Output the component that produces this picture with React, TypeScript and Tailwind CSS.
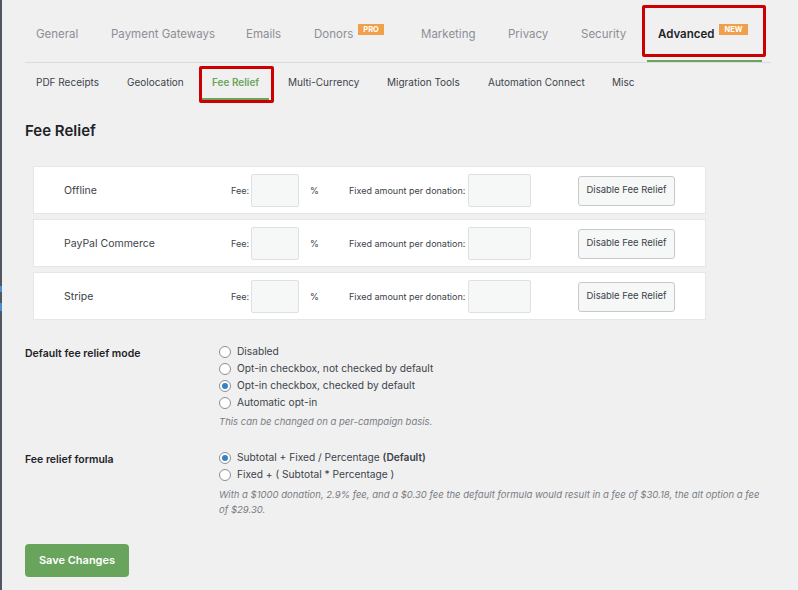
import React from 'react';

type Tab = { label: string; width: string; active?: boolean; badge?: string };

const tabs: Tab[] = [
    { label: 'General', width: 'w-[75px]' },
    { label: 'Payment Gateways', width: 'w-[135px]' },
    { label: 'Emails', width: 'w-[68px]' },
    { label: 'Donors', width: 'w-[107px]', badge: 'PRO' },
    { label: 'Marketing', width: 'w-[87px]' },
    { label: 'Privacy', width: 'w-[73px]' },
    { label: 'Security', width: 'w-[77px]' },
    { label: 'Advanced', width: 'w-[115px]', active: true, badge: 'NEW' },
];

const subTabs: Tab[] = [
    { label: 'PDF Receipts', width: 'w-[91px]' },
    { label: 'Geolocation', width: 'w-[85px]' },
    { label: 'Fee Relief', width: 'w-[68px] mr-[8px]', active: true },
    { label: 'Multi-Currency', width: 'w-[99px]' },
    { label: 'Migration Tools', width: 'w-[101px]' },
    { label: 'Automation Connect', width: 'w-[124px]' },
    { label: 'Misc', width: 'w-[50px]' },
];

const gateways = ['Offline', 'PayPal Commerce', 'Stripe'];

const Radio = ({ label, checked }: { label: React.ReactNode; checked?: boolean }) => (
    <label className="flex items-center h-[17px] text-[10.2px] text-[#3c434a]">
        <span className="w-[12px] h-[12px] rounded-full border border-[#8c8f94] bg-white flex items-center justify-center mr-[6px] shrink-0">
            {checked && <span className="w-[6px] h-[6px] rounded-full bg-[#3582c4]" />}
        </span>
        {label}
    </label>
);

export default function App() {
    return (
        <div className="flex min-h-[590px] bg-[#f0f0f1] font-['Inter',sans-serif]">
            {/* admin sidebar edge */}
            <div className="w-[2px] bg-[#50575e] flex flex-col shrink-0">
                <div className="mt-[286px] h-[6px] bg-[#4a90d9]" />
                <div className="mt-[11px] h-[8px] bg-[#4a90d9]" />
            </div>

            <div className="flex-1 pl-[23px] pr-[32px]">
                {/* main tabs */}
                <nav className="flex border-b border-[#dcdcde]">
                    {tabs.map((tab) => (
                        <div
                            key={tab.label}
                            className={`${tab.width} relative h-[62px] pt-[10px] pl-[11px] flex items-center border-b-2 whitespace-nowrap text-[11.5px] ${
                                tab.active
                                    ? 'border-[#6aa55a] text-[#1d2327] font-semibold'
                                    : 'border-transparent text-[#8c8f94]'
                            }`}
                        >
                            {tab.label}
                            {tab.badge && (
                                <span className="relative -top-[6px] ml-[5px] px-[5px] h-[11px] leading-[11px] bg-[#f0a04b] text-white text-[7.5px] font-bold">
                                    {tab.badge}
                                </span>
                            )}
                            {tab.active && (
                                <span className="absolute left-[-5px] top-[5px] w-[124px] h-[52px] border-[3px] border-[#cc0000] rounded-[2px]" />
                            )}
                        </div>
                    ))}
                </nav>

                {/* sub tabs */}
                <div className="flex">
                    {subTabs.map((tab) => (
                        <div
                            key={tab.label}
                            className={`${tab.width} relative h-[37px] pt-[3px] pl-[11px] flex items-center border-b-2 whitespace-nowrap text-[10px] ${
                                tab.active
                                    ? 'border-[#6aa55a] text-[#6aa55a] font-semibold'
                                    : 'border-transparent text-[#3c434a]'
                            }`}
                        >
                            {tab.label}
                            {tab.active && (
                                <span className="absolute left-[-2px] top-[3px] w-[75px] h-[37px] border-[3px] border-[#cc0000] rounded-[2px]" />
                            )}
                        </div>
                    ))}
                </div>

                <h1 className="mt-[21px] text-[15px] leading-[20px] font-semibold text-[#1d2327]">Fee Relief</h1>

                {/* gateway rows */}
                <div className="mt-[25px] ml-[8px] w-[673px] flex flex-col gap-[5px]">
                    {gateways.map((name) => (
                        <div key={name} className="h-[48px] pt-[1px] bg-white border border-[#e6e6e6] flex items-center text-[#3c434a]">
                            <span className="w-[197px] pl-[30px] text-[10.5px]">{name}</span>
                            <span className="w-[20px] text-[9px]">Fee:</span>
                            <span className="w-[48px] h-[33px] bg-[#f6f7f7] border border-[#e0e0e0] rounded-[2px]" />
                            <span className="w-[50px] pl-[11px] text-[9px]">%</span>
                            <span className="w-[119px] text-[9px] whitespace-nowrap">Fixed amount per donation:</span>
                            <span className="w-[63px] h-[33px] bg-[#f6f7f7] border border-[#e0e0e0] rounded-[2px]" />
                            <button className="ml-[47px] w-[97px] h-[30px] bg-[#f6f7f7] border border-[#c9c9c9] rounded-[3px] text-[9.5px] text-[#3c434a]">
                                Disable Fee Relief
                            </button>
                        </div>
                    ))}
                </div>

                {/* default mode */}
                <div className="mt-[23px] flex">
                    <div className="w-[194px] pt-[3px] text-[10.5px] font-semibold text-[#1d2327]">Default fee relief mode</div>
                    <div className="flex flex-col">
                        <Radio label="Disabled" />
                        <Radio label="Opt-in checkbox, not checked by default" />
                        <Radio label="Opt-in checkbox, checked by default" checked />
                        <Radio label="Automatic opt-in" />
                        <p className="mt-[3px] text-[9.5px] leading-[15px] italic text-[#787c82]">
                            This can be changed on a per-campaign basis.
                        </p>
                    </div>
                </div>

                {/* formula */}
                <div className="mt-[20px] flex">
                    <div className="w-[194px] pt-[3px] text-[10.5px] font-semibold text-[#1d2327]">Fee relief formula</div>
                    <div className="flex flex-col w-[552px]">
                        <Radio
                            label={
                                <span>
                                    Subtotal + Fixed / Percentage <strong className="font-semibold">(Default)</strong>
                                </span>
                            }
                            checked
                        />
                        <Radio label="Fixed + ( Subtotal * Percentage )" />
                        <p className="mt-[4px] text-[9.5px] leading-[15px] italic text-[#787c82]">
                            With a $1000 donation, 2.9% fee, and a $0.30 fee the default formula would result in a fee of $30.18, the alt option a fee of $29.30.
                        </p>
                    </div>
                </div>

                <button className="mt-[27px] w-[104px] h-[33px] bg-[#68a45c] rounded-[4px] text-white text-[11px] font-semibold">
                    Save Changes
                </button>
            </div>
        </div>
    );
}
